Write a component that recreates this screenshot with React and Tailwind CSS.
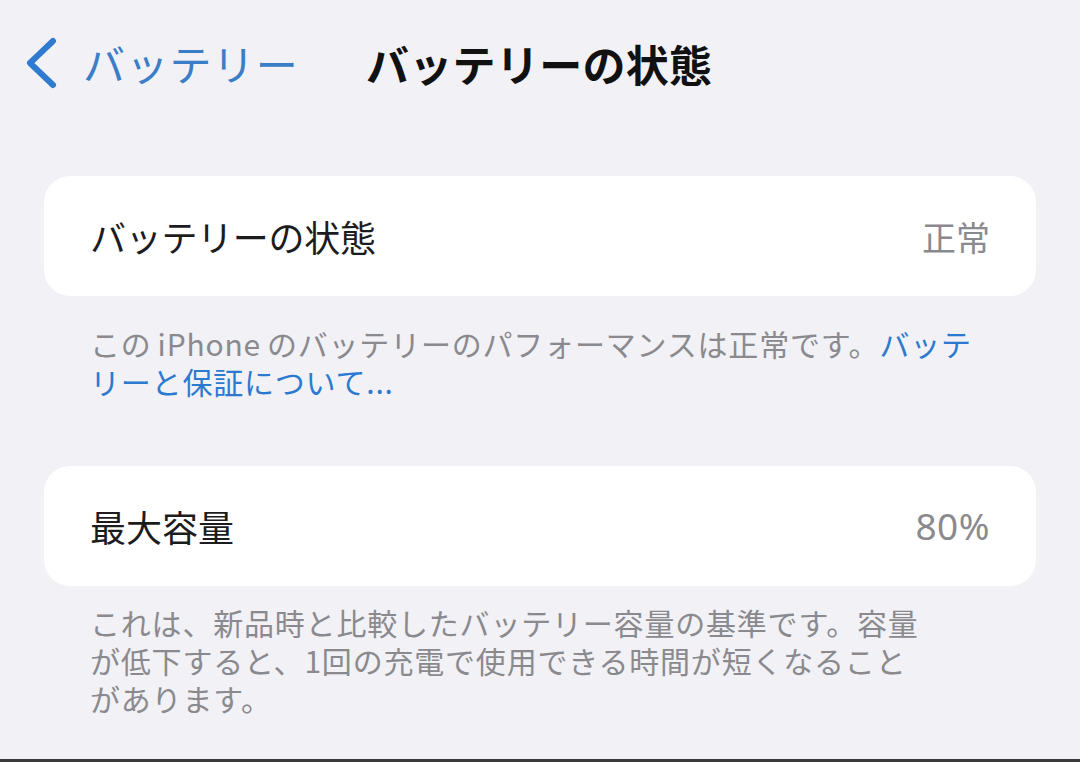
export default function App() {
  const font = { fontFamily: '"Noto Sans CJK JP", "Noto Sans", sans-serif' };
  return (
    <div
      className="w-[1080px] h-[762px] bg-[#f1f1f6] flex flex-col border-b-[3px] border-[#3a3a3c] overflow-hidden"
      style={font}
    >
      <div className="h-[126px] flex items-center shrink-0">
        <div className="flex items-center w-[366px] pl-[24px]">
          <svg width="34" height="52" viewBox="0 0 34 52" className="shrink-0">
            <path d="M29 4 L6 26 L29 48" fill="none" stroke="#2f7bd0" strokeWidth="6" strokeLinecap="round" strokeLinejoin="round" />
          </svg>
          <span className="ml-[25px] text-[42px] leading-none text-[#3a7ec8] tracking-[1.2px]">バッテリー</span>
        </div>
        <span className="text-[43px] leading-none font-bold text-[#111111] tracking-[0.3px]">バッテリーの状態</span>
      </div>

      <div className="mt-[50px] mx-[44px] h-[120px] bg-white rounded-[26px] flex items-center justify-between px-[46px] shrink-0">
        <span className="text-[36px] text-[#1c1c1e] -tracking-[0.3px]">バッテリーの状態</span>
        <span className="text-[34px] text-[#8a8a8e]">正常</span>
      </div>

      <div className="pt-[28px] px-[90px] text-[30px] leading-[38px] text-[#8a8a8e] whitespace-nowrap tracking-[0.8px]">
        <div>
          この<span className="mx-[6px]">iPhone</span>のバッテリーのパフォーマンスは正常です。<span className="text-[#2c7ad0]">バッテ</span>
        </div>
        <div className="text-[#2c7ad0]">リーと保証について...</div>
      </div>

      <div className="mt-[66px] mx-[44px] h-[120px] bg-white rounded-[26px] flex items-center justify-between px-[46px] shrink-0">
        <span className="text-[36px] text-[#1c1c1e]">最大容量</span>
        <span className="text-[37px] text-[#8a8a8e] tracking-[0.5px]" style={{ fontFamily: '"Noto Sans", sans-serif' }}>80%</span>
      </div>

      <div className="pt-[17px] px-[90px] text-[30px] leading-[38px] text-[#8a8a8e] whitespace-nowrap tracking-[0.8px]">
        <div>これは、新品時と比較したバッテリー容量の基準です。容量</div>
        <div>が低下すると、1回の充電で使用できる時間が短くなること</div>
        <div>があります。</div>
      </div>
    </div>
  );
}
